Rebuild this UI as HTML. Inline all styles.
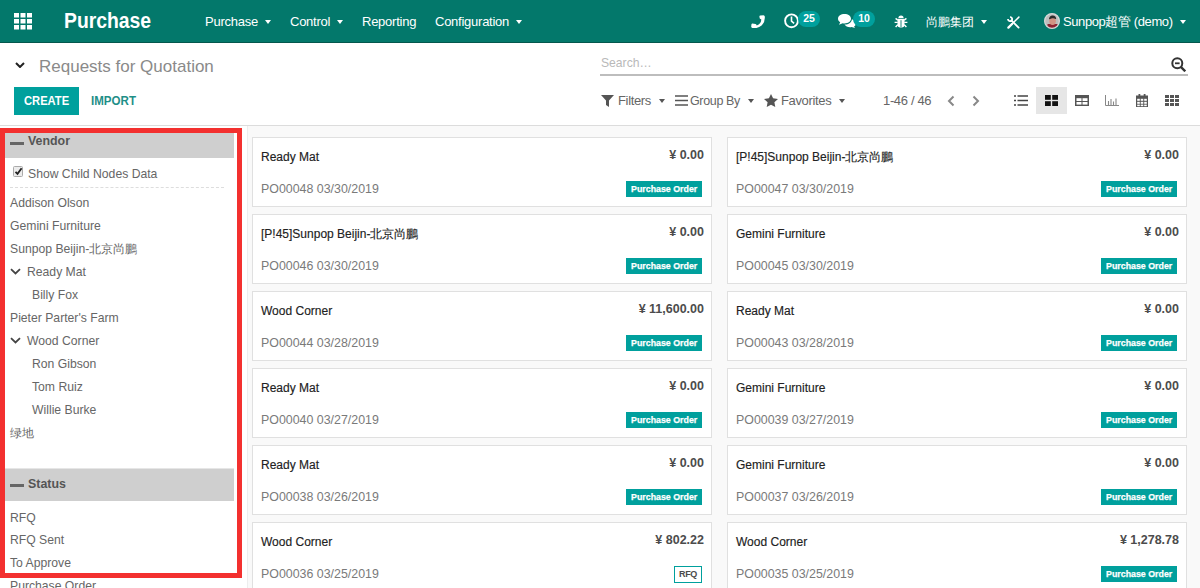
<!DOCTYPE html>
<html><head><meta charset="utf-8">
<style>
*{margin:0;padding:0;box-sizing:border-box}
html,body{width:1200px;height:588px;overflow:hidden;background:#f9f9f9;font-family:"Liberation Sans",sans-serif;color:#4c4c4c;position:relative}
.a{position:absolute;white-space:nowrap}
#nav{position:absolute;left:0;top:0;width:1200px;height:43px;background:#03786b;border-bottom:1px solid #04574d}
#nav .m{position:absolute;top:14px;color:#fff;font-size:13px;letter-spacing:-0.25px;line-height:16px;white-space:nowrap}
.caret{display:inline-block;width:0;height:0;border-left:3.5px solid transparent;border-right:3.5px solid transparent;border-top:4px solid currentColor;vertical-align:middle;margin-left:7px;position:relative;top:-1px}
#cp .caret{margin-left:8px}
.card .t{-webkit-text-stroke:0.15px #222}
#cp{position:absolute;left:0;top:43px;width:1200px;height:83px;background:#fff;border-bottom:1px solid #dcdcdc}
#cp .f{position:absolute;top:50px;font-size:13px;letter-spacing:-0.35px;color:#666;line-height:16px;white-space:nowrap}
#side{position:absolute;left:0;top:126px;width:248px;height:462px;background:#fff;border-right:1px solid #ededed}
.card{position:absolute;width:460px;height:70px;background:#fff;border:1px solid #e0e0e0}
.card .t{position:absolute;left:8px;top:12px;font-size:12px;line-height:15px;color:#222;white-space:nowrap}
.card .p{position:absolute;left:8px;top:44px;font-size:12.4px;line-height:15px;color:#7a7a7a;white-space:nowrap}
.card .amt{position:absolute;right:7px;top:10px;font-size:12.5px;line-height:15px;font-weight:700;color:#4c4c4c;white-space:nowrap}
.card .b{position:absolute;right:9px;top:43px;width:76px;height:16px;background:#00a09d;color:#fff;font-size:9.5px;-webkit-text-stroke:0.25px #fff;font-weight:700;line-height:16px;white-space:nowrap}
.card .b span{position:absolute;left:5px;top:0;transform:scaleX(0.93);transform-origin:0 0}
.card .r{position:absolute;right:9px;top:43px;width:28px;text-align:center;height:17px;padding:0;border:1px solid #00a09d;color:#4c4c4c;font-size:9px;letter-spacing:-0.3px;font-weight:700;line-height:15px;background:#fff;white-space:nowrap}
.si{position:absolute;left:10px;font-size:12.2px;line-height:15px;color:#666;white-space:nowrap}
.si.c{left:32px}
.si.e{left:27px}
.chv{position:absolute;left:11px}
.hdr{position:absolute;left:5px;width:229px;background:#cfcfcf}
.hdr .mi{position:absolute;left:5px;width:14px;height:3px;background:#666}
.hdr .tx{position:absolute;left:23px;font-size:12.4px;font-weight:700;color:#555;line-height:15px}
#red{position:absolute;left:0;top:128px;width:242px;height:450px;border:5px solid #f3302f}

</style></head><body>
<div id="nav">
  <svg class="a" style="left:14px;top:13px" width="18" height="17" viewBox="0 0 18 17">
    <g fill="#fff">
      <rect x="0" y="0" width="5" height="4.5"/><rect x="6.5" y="0" width="5" height="4.5"/><rect x="13" y="0" width="5" height="4.5"/>
      <rect x="0" y="6" width="5" height="4.5"/><rect x="6.5" y="6" width="5" height="4.5"/><rect x="13" y="6" width="5" height="4.5"/>
      <rect x="0" y="12" width="5" height="4.5"/><rect x="6.5" y="12" width="5" height="4.5"/><rect x="13" y="12" width="5" height="4.5"/>
    </g>
  </svg>
  <div class="a" style="left:64px;top:9px;color:#fff;font-size:21.5px;font-weight:700;line-height:24px;transform:scaleX(0.9);transform-origin:0 0">Purchase</div>
  <div class="m" style="left:205px">Purchase<span class="caret"></span></div>
  <div class="m" style="left:290px">Control<span class="caret"></span></div>
  <div class="m" style="left:362px">Reporting</div>
  <div class="m" style="left:435px">Configuration<span class="caret"></span></div>
  <!-- phone -->
  <svg class="a" style="left:751px;top:15px" width="14" height="13" viewBox="0 0 14 13"><path fill="#fff" d="M9.3 0.6L12.6 0.2Q13.6 0.4 13.8 1.6Q14.2 7 10.6 10.6Q6.8 13.8 1.4 13Q0.3 12.8 0.2 11.8L0.4 9.4Q0.6 8.6 1.6 8.6L4.4 8.9Q5.2 9 5.5 9.9L5.7 10.6Q8 9.8 9.2 8Q10.4 6.2 10.2 4.2L9.4 4Q8.6 3.7 8.6 2.8L8.4 1.6Q8.4 0.8 9.3 0.6Z"/></svg>
  <!-- clock -->
  <svg class="a" style="left:784px;top:13px" width="16" height="16" viewBox="0 0 16 16"><circle cx="7.5" cy="7.8" r="6.4" fill="none" stroke="#fff" stroke-width="1.9"/><path d="M7.5 3.6v4.6l2.6 2.2" fill="none" stroke="#fff" stroke-width="1.6"/></svg>
  <div class="a" style="left:798px;top:11px;width:22px;height:16px;border-radius:8px;background:#00a09d;color:#fff;font-size:10.5px;font-weight:700;line-height:15px;text-align:center">25</div>
  <!-- chat -->
  <svg class="a" style="left:838px;top:14px" width="18" height="14" viewBox="0 0 18 14"><path d="M6.5 0C10.1 0 13 2.1 13 4.7S10.1 9.4 6.5 9.4c-.6 0-1.2 0-1.8-.2L1 10.8l1.2-2.6C.8 7.4 0 6.1 0 4.7 0 2.1 2.9 0 6.5 0z" fill="#fff"/><path d="M13.9 5.2c2.4.7 4.1 2.3 4.1 4.2 0 1.3-.8 2.4-2 3.1l1 1.5-3.4-.9c-.5.1-1 .2-1.5.2-2.5 0-4.7-1.1-5.6-2.7 4 .1 7.4-2.3 7.4-5.4z" fill="#fff"/></svg>
  <div class="a" style="left:853px;top:11px;width:22px;height:16px;border-radius:8px;background:#00a09d;color:#fff;font-size:10.5px;font-weight:700;line-height:15px;text-align:center">10</div>
  <!-- bug -->
  <svg class="a" style="left:894px;top:15px" width="14" height="13" viewBox="0 0 14 13"><path d="M4.4 3A2.6 2.6 0 0 1 9.6 3z" fill="#fff"/><path d="M3.5 3.8h7v6.2a2.4 2.4 0 0 1-2.4 2.4H5.9A2.4 2.4 0 0 1 3.5 10z" fill="#fff"/><path d="M3.8 5.2L1.6 3.4M10.2 5.2l2.2-1.8M0.6 7.4h3.2M10.2 7.4h3.2M3.8 9.8L1.6 12M10.2 9.8l2.2 2.2" stroke="#fff" stroke-width="1.4"/><path d="M7 5.2v7" stroke="#03786b" stroke-width="0.9"/></svg>
  <div class="m" style="left:926px;font-size:12.25px;letter-spacing:0">尚鵬集团<span class="caret"></span></div>
  <!-- tools -->
  <svg class="a" style="left:1007px;top:16px" width="13" height="13" viewBox="0 0 13 13"><path d="M3 1A2.1 2.1 0 1 1 1 3" fill="none" stroke="#fff" stroke-width="1.7"/><path d="M4.4 4.4l7.2 7.2" stroke="#fff" stroke-width="1.9" stroke-linecap="round"/><path d="M11.9 1.1L5 8" stroke="#fff" stroke-width="1.5" stroke-linecap="round"/><path d="M1.4 11.6L5 8" stroke="#fff" stroke-width="2.3" stroke-linecap="round"/></svg>
  <svg class="a" style="left:1044px;top:13px" width="16" height="16" viewBox="0 0 16 16"><defs><clipPath id="av"><circle cx="8" cy="8" r="7.5"/></clipPath></defs><g clip-path="url(#av)"><rect width="16" height="16" fill="#bdbdbd"/><rect x="3.5" y="11" width="10" height="6" fill="#8c2232"/><ellipse cx="8.6" cy="8" rx="3.3" ry="4" fill="#d39384"/><path d="M5 6Q5.5 2.2 8.8 2.5Q12 2.8 12.2 6L11.6 6Q9 4.2 5.6 6.2z" fill="#2b2b2b"/></g><circle cx="8" cy="8" r="7.4" fill="none" stroke="#d8d8d8" stroke-width="1.2"/></svg>
  <div class="m" style="left:1063px;font-size:13px;letter-spacing:-0.4px">Sunpop超管 (demo)<span class="caret"></span></div>
</div>

<div id="cp">
  <svg class="a" style="left:15px;top:19px" width="10" height="6" viewBox="0 0 10 6"><path d="M1 1l4 4 4-4" fill="none" stroke="#222" stroke-width="2"/></svg>
  <div class="a" style="left:39px;top:14px;font-size:17px;color:#8a8a8a;line-height:20px">Requests for Quotation</div>
  <div class="a" style="left:14px;top:44px;width:65px;height:28px;background:#00a09d"></div><div class="a" style="left:24px;top:50px;color:#fff;font-size:13px;font-weight:700;line-height:16px;transform:scaleX(0.86);transform-origin:0 0">CREATE</div><div class="a" style="left:91px;top:50px;color:#1f8f88;font-size:13px;font-weight:700;line-height:16px;transform:scaleX(0.89);transform-origin:0 0">IMPORT</div>
  <div class="a" style="left:601px;top:12px;font-size:13.5px;color:#b9b9b9;line-height:16px;transform:scaleX(0.9);transform-origin:0 0">Search…</div>
  <div class="a" style="left:600px;top:31px;width:588px;height:2px;background:#bdbdbd"></div>
  <svg class="a" style="left:1171px;top:14px" width="16" height="15" viewBox="0 0 16 15"><circle cx="6.3" cy="6.3" r="5" fill="none" stroke="#333" stroke-width="2"/><path d="M4 6.3h4.6" stroke="#333" stroke-width="1.8"/><path d="M9.8 9.8l4.5 4.5" stroke="#333" stroke-width="2.4"/></svg>
  <!-- filters -->
  <svg class="a" style="left:601px;top:52px" width="13" height="12" viewBox="0 0 13 12"><path d="M0 0h13L8 5.5V12L5 10V5.5z" fill="#555"/></svg>
  <div class="f" style="left:618px">Filters<span class="caret" style="color:#555"></span></div>
  <svg class="a" style="left:675px;top:52px" width="13" height="11" viewBox="0 0 13 11"><path d="M0 1h13M0 5.5h13M0 10h13" stroke="#555" stroke-width="1.6"/></svg>
  <div class="f" style="left:690px;font-size:12.5px">Group By<span class="caret" style="color:#555"></span></div>
  <svg class="a" style="left:764px;top:51px" width="14" height="13" viewBox="0 0 14 13"><path d="M7 0l2.1 4.3 4.9.6-3.6 3.3.9 4.8L7 10.7 2.7 13l.9-4.8L0 4.9l4.9-.6z" fill="#555"/></svg>
  <div class="f" style="left:781px">Favorites<span class="caret" style="color:#555"></span></div>
  <div class="f" style="left:883px;color:#666">1-46 / 46</div>
  <svg class="a" style="left:947px;top:52px" width="8" height="12" viewBox="0 0 8 12"><path d="M6.5 1.5L2 6l4.5 4.5" fill="none" stroke="#888" stroke-width="2"/></svg>
  <svg class="a" style="left:972px;top:52px" width="8" height="12" viewBox="0 0 8 12"><path d="M1.5 1.5L6 6l-4.5 4.5" fill="none" stroke="#888" stroke-width="2"/></svg>
  <!-- view switcher -->
  <svg class="a" style="left:1014px;top:52px" width="14" height="11" viewBox="0 0 14 11"><path d="M0 1h2M0 5.5h2M0 10h2M3.5 1h10.5M3.5 5.5h10.5M3.5 10h10.5" stroke="#444" stroke-width="1.5"/></svg>
  <div class="a" style="left:1036px;top:44px;width:31px;height:27px;background:#e6e6e6"></div>
  <svg class="a" style="left:1045px;top:52px" width="13" height="11" viewBox="0 0 13 11"><g fill="#111"><rect x="0" y="0" width="5.8" height="4.8"/><rect x="7.2" y="0" width="5.8" height="4.8"/><rect x="0" y="6.2" width="5.8" height="4.8"/><rect x="7.2" y="6.2" width="5.8" height="4.8"/></g></svg>
  <svg class="a" style="left:1075px;top:52px" width="14" height="11" viewBox="0 0 14 11"><rect x="0" y="0" width="14" height="11" fill="#555"/><g fill="#fff"><rect x="1.5" y="3.2" width="5" height="2.8"/><rect x="7.5" y="3.2" width="5" height="2.8"/><rect x="1.5" y="7" width="5" height="2.6"/><rect x="7.5" y="7" width="5" height="2.6"/></g></svg>
  <svg class="a" style="left:1105px;top:52px" width="14" height="11" viewBox="0 0 14 11"><path d="M0.5 0v10.5H14" fill="none" stroke="#888" stroke-width="1"/><path d="M3.5 6v4M6 4v6M8.5 6.5v3.5M11 3.5v6.5" stroke="#888" stroke-width="1.1"/></svg>
  <svg class="a" style="left:1136px;top:51px" width="12" height="13" viewBox="0 0 12 13"><rect x="0" y="1.5" width="12" height="11.5" fill="#555"/><rect x="2.5" y="0" width="1.8" height="2.5" fill="#555"/><rect x="7.7" y="0" width="1.8" height="2.5" fill="#555"/><g fill="#fff"><rect x="1.2" y="4.8" width="2.6" height="2"/><rect x="4.7" y="4.8" width="2.6" height="2"/><rect x="8.2" y="4.8" width="2.6" height="2"/><rect x="1.2" y="7.8" width="2.6" height="2"/><rect x="4.7" y="7.8" width="2.6" height="2"/><rect x="8.2" y="7.8" width="2.6" height="2"/><rect x="1.2" y="10.6" width="2.6" height="1.6"/><rect x="4.7" y="10.6" width="2.6" height="1.6"/><rect x="8.2" y="10.6" width="2.6" height="1.6"/></g></svg>
  <svg class="a" style="left:1165px;top:52px" width="14" height="11" viewBox="0 0 14 11"><g fill="#555"><rect x="0" y="0" width="4" height="3"/><rect x="5" y="0" width="4" height="3"/><rect x="10" y="0" width="4" height="3"/><rect x="0" y="4" width="4" height="3"/><rect x="5" y="4" width="4" height="3"/><rect x="10" y="4" width="4" height="3"/><rect x="0" y="8" width="4" height="3"/><rect x="5" y="8" width="4" height="3"/><rect x="10" y="8" width="4" height="3"/></g></svg>
</div>

<div id="side">
  <div class="hdr" style="top:2px;height:30px"><div class="mi" style="top:14px"></div><div class="tx" style="top:6px">Vendor</div></div>
  <div class="a" style="left:13px;top:40px;width:10px;height:11px;border:1px solid #aaa;background:#ececec;border-radius:1.5px"></div>
  <svg class="a" style="left:14px;top:41px" width="9" height="9" viewBox="0 0 9 9"><path d="M1.5 4.8l2 2L7.6 1.2" fill="none" stroke="#222" stroke-width="1.8"/></svg>
  <div class="si" style="left:28px;top:41px">Show Child Nodes Data</div>
  <div class="a" style="left:10px;top:61px;width:214px;height:0;border-top:1px dashed #ddd"></div>
  <div class="si" style="top:70px">Addison Olson</div>
  <div class="si" style="top:93px">Gemini Furniture</div>
  <div class="si" style="top:116px">Sunpop Beijin-北京尚鵬</div>
  <svg class="chv" style="top:142px;left:10px" width="11" height="7" viewBox="0 0 11 7"><path d="M1 1.2L5.5 5.4 10 1.2" fill="none" stroke="#444" stroke-width="1.8"/></svg>
  <div class="si e" style="top:139px">Ready Mat</div>
  <div class="si c" style="top:162px">Billy Fox</div>
  <div class="si" style="top:185px">Pieter Parter's Farm</div>
  <svg class="chv" style="top:211px;left:10px" width="11" height="7" viewBox="0 0 11 7"><path d="M1 1.2L5.5 5.4 10 1.2" fill="none" stroke="#444" stroke-width="1.8"/></svg>
  <div class="si e" style="top:208px">Wood Corner</div>
  <div class="si c" style="top:231px">Ron Gibson</div>
  <div class="si c" style="top:254px">Tom Ruiz</div>
  <div class="si c" style="top:277px">Willie Burke</div>
  <div class="si" style="top:300px">绿地</div>
  <div class="a" style="left:5px;top:342px;width:229px;height:1px;background:#e6e6e6"></div>
  <div class="hdr" style="top:343px;height:32px"><div class="mi" style="top:15px"></div><div class="tx" style="top:8px">Status</div></div>
  <div class="si" style="top:385px">RFQ</div>
  <div class="si" style="top:407px">RFQ Sent</div>
  <div class="si" style="top:430px">To Approve</div>
  <div class="si" style="top:453px">Purchase Order</div>
</div>
<div id="red"></div>
<div class="card" style="left:252px;top:137px"><div class="t">Ready Mat</div><div class="amt">¥ 0.00</div><div class="p">PO00048 03/30/2019</div><div class="b"><span>Purchase Order</span></div></div>
<div class="card" style="left:727px;top:137px"><div class="t">[P!45]Sunpop Beijin-北京尚鵬</div><div class="amt">¥ 0.00</div><div class="p">PO00047 03/30/2019</div><div class="b"><span>Purchase Order</span></div></div>
<div class="card" style="left:252px;top:214px"><div class="t">[P!45]Sunpop Beijin-北京尚鵬</div><div class="amt">¥ 0.00</div><div class="p">PO00046 03/30/2019</div><div class="b"><span>Purchase Order</span></div></div>
<div class="card" style="left:727px;top:214px"><div class="t">Gemini Furniture</div><div class="amt">¥ 0.00</div><div class="p">PO00045 03/30/2019</div><div class="b"><span>Purchase Order</span></div></div>
<div class="card" style="left:252px;top:291px"><div class="t">Wood Corner</div><div class="amt">¥ 11,600.00</div><div class="p">PO00044 03/28/2019</div><div class="b"><span>Purchase Order</span></div></div>
<div class="card" style="left:727px;top:291px"><div class="t">Ready Mat</div><div class="amt">¥ 0.00</div><div class="p">PO00043 03/28/2019</div><div class="b"><span>Purchase Order</span></div></div>
<div class="card" style="left:252px;top:368px"><div class="t">Ready Mat</div><div class="amt">¥ 0.00</div><div class="p">PO00040 03/27/2019</div><div class="b"><span>Purchase Order</span></div></div>
<div class="card" style="left:727px;top:368px"><div class="t">Gemini Furniture</div><div class="amt">¥ 0.00</div><div class="p">PO00039 03/27/2019</div><div class="b"><span>Purchase Order</span></div></div>
<div class="card" style="left:252px;top:445px"><div class="t">Ready Mat</div><div class="amt">¥ 0.00</div><div class="p">PO00038 03/26/2019</div><div class="b"><span>Purchase Order</span></div></div>
<div class="card" style="left:727px;top:445px"><div class="t">Gemini Furniture</div><div class="amt">¥ 0.00</div><div class="p">PO00037 03/26/2019</div><div class="b"><span>Purchase Order</span></div></div>
<div class="card" style="left:252px;top:522px"><div class="t">Wood Corner</div><div class="amt">¥ 802.22</div><div class="p">PO00036 03/25/2019</div><div class="r">RFQ</div></div>
<div class="card" style="left:727px;top:522px"><div class="t">Wood Corner</div><div class="amt">¥ 1,278.78</div><div class="p">PO00035 03/25/2019</div><div class="b"><span>Purchase Order</span></div></div>

</body></html>
